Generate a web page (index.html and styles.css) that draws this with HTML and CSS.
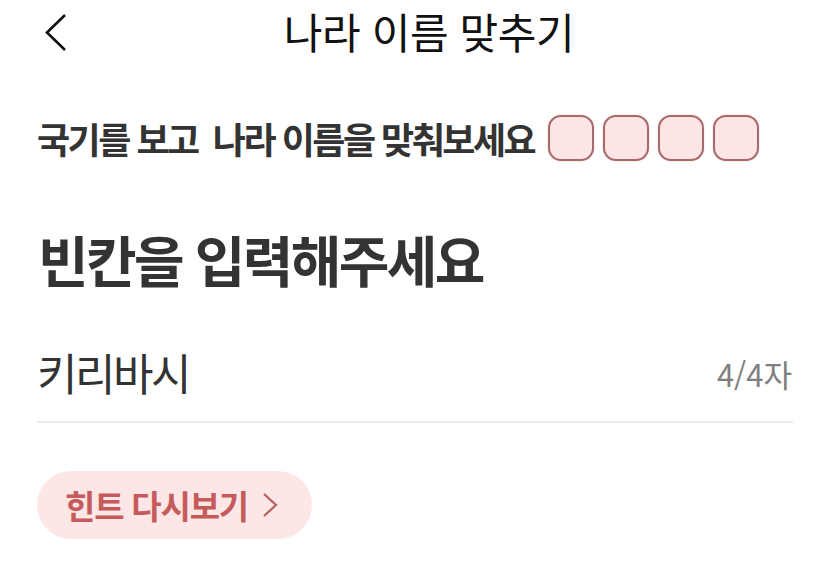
FILE: index.html
```html
<!DOCTYPE html>
<html lang="ko">
<head>
<meta charset="utf-8">
<link rel="stylesheet" href="styles.css">
</head>
<body>
<div class="screen">
  <header class="topbar">
    <span class="back">
      <svg width="24" height="40" viewBox="0 0 24 40"><polyline points="21,2 3,19.5 21,37" fill="none" stroke="#111" stroke-width="2.6" stroke-linejoin="miter"/></svg>
    </span>
    <h1 class="title">나라 이름 맞추기</h1>
  </header>

  <div class="instruction">
    <p class="inst-text">국기를 보고&nbsp; 나라 이름을 맞춰보세요</p>
    <div class="slots">
      <span class="slot"></span>
      <span class="slot"></span>
      <span class="slot"></span>
      <span class="slot"></span>
    </div>
  </div>

  <h2 class="heading">빈칸을 입력해주세요</h2>

  <div class="field">
    <span class="answer">키리바시</span>
    <span class="count">4/4자</span>
  </div>

  <button class="hint">
    <span>힌트 다시보기</span>
    <svg width="16" height="26" viewBox="0 0 16 26"><polyline points="2,2 14,13 2,24" fill="none" stroke="#b85f5f" stroke-width="2.2"/></svg>
  </button>
</div>
</body>
</html>
```

FILE: styles.css
```css
* { box-sizing: border-box; }
html, body {
  margin: 0;
  padding: 0;
  background: #ffffff;
}
body {
  font-family: "Noto Sans CJK KR", "Noto Sans", sans-serif;
  color: #333333;
}
.screen {
  width: 830px;
  height: 566px;
  overflow: hidden;
}
.topbar {
  height: 66px;
  display: flex;
  align-items: flex-start;
  padding-left: 44px;
  padding-right: 40px;
}
.back {
  display: flex;
  width: 24px;
  height: 40px;
  margin-top: 13px;
}
.title {
  flex: 1;
  margin: 0;
  text-align: center;
  font-size: 42px;
  font-weight: 400;
  letter-spacing: -0.4px;
  line-height: 62px;
  color: #111111;
}
.instruction {
  margin-top: 49px;
  height: 46px;
  display: flex;
  align-items: center;
  padding-left: 37px;
}
.inst-text {
  margin: 0;
  font-size: 36px;
  font-weight: 700;
  letter-spacing: -2.5px;
  line-height: 46px;
  color: #333333;
  white-space: pre;
}
.slots {
  display: flex;
  gap: 9px;
  margin-left: 14px;
}
.slot {
  width: 46px;
  height: 46px;
  border: 2px solid #a8696a;
  border-radius: 13px;
  background: #fde5e5;
  box-shadow: 0 0 2px rgba(200, 110, 110, 0.35);
}
.heading {
  margin: 62px 0 0;
  padding-left: 38px;
  font-size: 55px;
  font-weight: 700;
  letter-spacing: -2.6px;
  line-height: 70px;
  color: #333333;
}
.field {
  margin: 51px 37px 0;
  height: 79px;
  display: flex;
  justify-content: space-between;
  align-items: flex-start;
  border-bottom: 2px solid #ebebeb;
}
.answer {
  font-size: 44px;
  font-weight: 400;
  letter-spacing: -2.5px;
  line-height: 56px;
  color: #333333;
}
.count {
  font-size: 31px;
  font-weight: 400;
  letter-spacing: 0;
  line-height: 60px;
  color: #7f7f7f;
  padding-right: 1px;
}
.hint {
  margin: 48px 0 0 37px;
  width: 275px;
  height: 68px;
  border: none;
  border-radius: 34px;
  background: #fde6e6;
  display: flex;
  align-items: center;
  gap: 14px;
  padding: 0 0 0 28px;
  font-family: inherit;
  font-size: 33px;
  font-weight: 700;
  letter-spacing: -1.2px;
  color: #c55b5b;
}
.hint svg {
  display: block;
}
```
